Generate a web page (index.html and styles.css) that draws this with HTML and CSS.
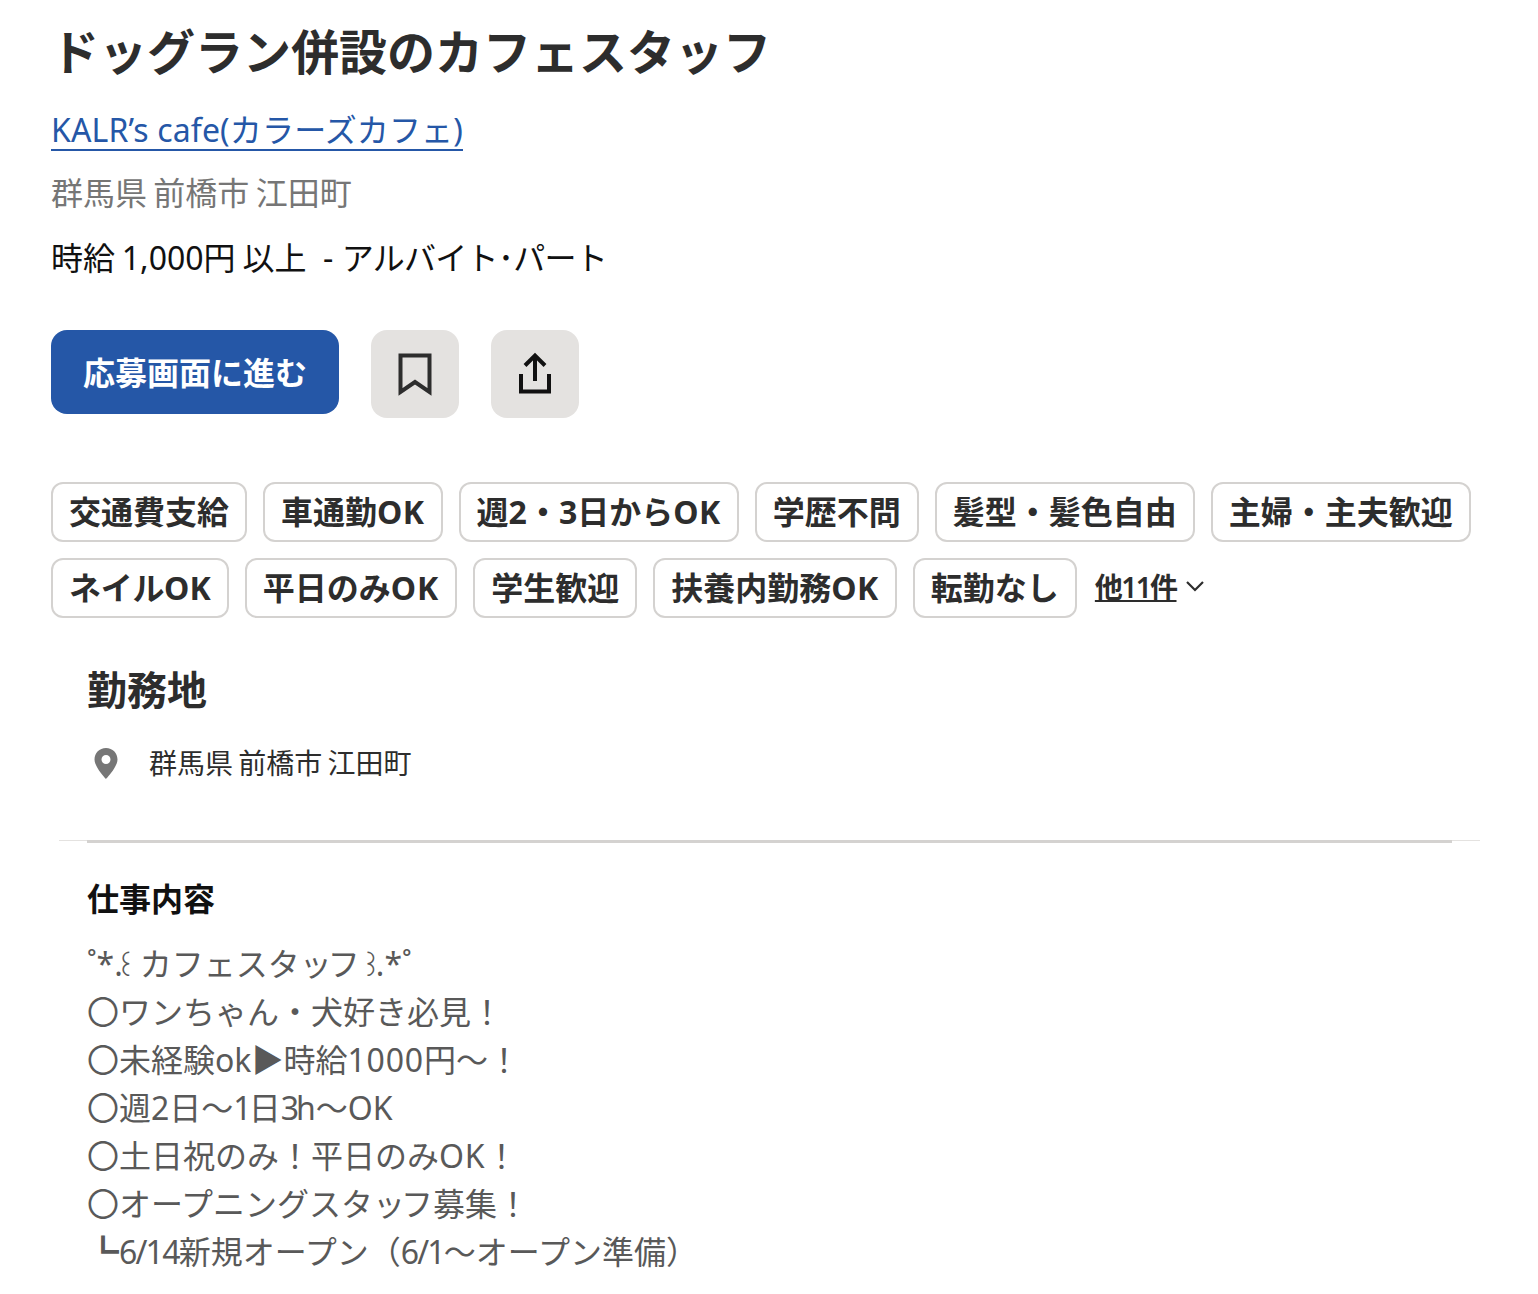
FILE: index.html
```html
<!DOCTYPE html>
<html lang="ja">
<head>
<meta charset="utf-8">
<title>ドッグラン併設のカフェスタッフ</title>
<link rel="stylesheet" href="styles.css">
</head>
<body>
<main class="page">
  <header class="head">
    <h1 class="title">ドッグラン併設のカフェスタッフ</h1>
    <div class="company"><a class="company-link" href="#">KALR’s cafe(カラーズカフェ)</a></div>
    <div class="place">群馬県 前橋市 江田町</div>
    <div class="salary"><span class="pay">時給 1,000円 以上</span> &nbsp;- <span class="job-type">アルバイト･パート</span></div>
    <div class="actions">
      <button class="apply">応募画面に進む</button>
      <button class="icon-btn" aria-label="保存">
        <svg width="36" height="44" viewBox="0 0 36 44"><path d="M3.5 3.500h29v36.500L18 30 3.500 40z" fill="none" stroke="#2d2d2d" stroke-width="4"/></svg>
      </button>
      <button class="icon-btn" aria-label="共有">
        <svg width="36" height="44" viewBox="0 0 36 44"><path d="M18 29V4M8 13.500 18 3.500l10 10M4 22v17.500h28V22" fill="none" stroke="#111" stroke-width="4"/></svg>
      </button>
    </div>
  </header>
  <ul class="chips">
    <li class="chip">交通費支給</li>
    <li class="chip">車通勤<span class="ok">OK</span></li>
    <li class="chip">週2・3日から<span class="ok">OK</span></li>
    <li class="chip">学歴不問</li>
    <li class="chip">髪型・髪色自由</li>
    <li class="chip">主婦・主夫歓迎</li>
    <li class="chip"><span class="kana-tight">ネイル</span>OK</li>
    <li class="chip">平日のみ<span class="ok-wide">OK</span></li>
    <li class="chip">学生歓迎</li>
    <li class="chip">扶養内勤務<span class="ok">OK</span></li>
    <li class="chip">転勤なし</li>
    <li class="more"><a class="more-link" href="#">他11件</a>
      <svg width="20" height="12" viewBox="0 0 20 12"><path d="M2 2l8 8 8-8" fill="none" stroke="#2d2d2d" stroke-width="2.200"/></svg>
    </li>
  </ul>
  <section class="location">
    <h2 class="section-title">勤務地</h2>
    <div class="loc-row">
      <svg class="pin" width="26" height="32" viewBox="0 0 26 32"><path fill-rule="evenodd" d="M13 1C6.400 1 1.500 6 1.500 12.500 1.500 20 13 32 13 32s11.500-12 11.500-19.500C24.500 6 19.600 1 13 1zm0 16a4.500 4.500 0 1 1 0-9 4.500 4.500 0 0 1 0 9z" fill="#767676"/></svg>
      <span class="loc-text">群馬県 前橋市 江田町</span>
    </div>
  </section>
  <div class="rule"><div class="rule-inner"></div></div>
  <section class="desc">
    <h3 class="desc-title">仕事内容</h3>
    <p class="desc-body">˚*<span class="dot-tight">.</span><span class="yi-open">꒰</span>カフェスタ<span class="small-tsu">ッ</span>フ<span class="yi-close">꒱</span>.*˚<br>〇ワンちゃん・犬好き必見！<br>〇未経験ok▶︎時給<span class="num-wide">1000</span>円〜！<br>〇週2日〜<span class="num-narrow">1</span>日<span class="num-narrow">3</span>h〜OK<br>〇土日祝のみ！平日のみ<span class="num-wide">OK</span>！<br>〇オープニングスタ<span class="small-tsu">ッ</span>フ募集！<br>┗<span class="num-tight">6/14</span>新規オープン（<span class="num-tight">6/1</span>〜オープン準備）</p>
  </section>
</main>
</body>
</html>
```
FILE: styles.css
```css
* { box-sizing: border-box; }
html, body { margin: 0; padding: 0; background: #fff; }
body {
  font-family: "Noto Sans", "Noto Sans CJK JP", sans-serif;
  color: #2d2d2d;
  font-size: 32px;
}
.page { padding: 22px 58px 0 51px; }
.title { margin: 0; font-size: 48px; line-height: 60px; font-weight: 700; color: #2d2d2d; }
.company { margin-top: 28px; line-height: 40px; }
.company-link { color: #2557a7; text-decoration: none; border-bottom: 2px solid #2557a7; display: inline-block; line-height: 38px; letter-spacing: .14px; }
.place { margin-top: 22px; color: #767676; line-height: 40px; word-spacing: -2px; }
.salary { margin-top: 25px; color: #111; line-height: 40px; }
.pay { word-spacing: -1.500px; }
.job-type { letter-spacing: -.7px; }
.actions { display: flex; gap: 32px; margin-top: 52px; align-items: flex-start; }
.apply {
  height: 84px; padding: 0 32px 3px; border: 0; border-radius: 16px;
  background: #2557a7; color: #fff; font: inherit; font-weight: 700;
}
.icon-btn {
  width: 88px; height: 88px; padding: 0; border: 0; border-radius: 16px;
  background: #e4e2e0; display: flex; align-items: center; justify-content: center;
}
.chips { list-style: none; margin: 64px 0 0; padding: 0; display: flex; flex-wrap: wrap; gap: 16px; }
.chip {
  height: 60px; padding: 0 16px; border: 2px solid #d4d2d0; border-radius: 12px;
  font-weight: 700; line-height: 56px; color: #2d2d2d; background: #fff;
}
.ok { letter-spacing: .5px; }
.ok-wide { letter-spacing: 1px; }
.kana-tight { letter-spacing: -.3px; }
.more { display: flex; align-items: center; gap: 8px; height: 60px; padding-bottom: 5px; margin-left: 2px; font-size: 28px; font-weight: 600; }
.more-link { color: #2d2d2d; text-decoration: underline; letter-spacing: -1.600px; }
.location { padding: 46px 0 0 36px; }
.section-title { margin: 0; font-size: 40px; line-height: 52px; font-weight: 700; }
.loc-row { display: flex; align-items: center; gap: 30px; margin-top: 27px; padding-left: 6px; }
.loc-text { font-size: 28px; line-height: 40px; color: #2d2d2d; word-spacing: -2px; }
.rule { margin: 57px 0 0 8px; width: 1421px; border-top: 1px solid #e4e2e0; padding: 0 28px; }
.rule-inner { height: 3px; margin-top: -1px; background: #d4d2d0; }
.desc { padding: 0 0 0 36px; }
.desc-title { margin: 30px 0 0; font-size: 32px; line-height: 52px; font-weight: 700; color: #111; }
.desc-body { margin: 15px 0 0; line-height: 48px; color: #595959; font-size: 32px; word-spacing: -3px; }
.dot-tight { letter-spacing: -8px; }
.yi-open { font-size: 28px; line-height: 0; letter-spacing: 3px; }
.yi-close { font-size: 28px; line-height: 0; letter-spacing: -6px; }
.small-tsu { letter-spacing: -4px; }
.num-wide { letter-spacing: .8px; }
.num-tight { letter-spacing: -1.800px; }
.num-narrow { letter-spacing: -3px; }
```
